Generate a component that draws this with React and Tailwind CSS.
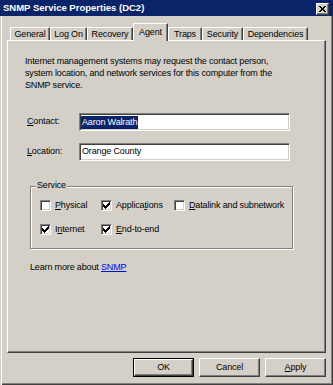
import React from "react";

const Check = () => (
  <svg width="7" height="7" viewBox="0 0 7 7" shapeRendering="crispEdges" fill="#000">
    <rect x="0" y="2" width="1" height="3" />
    <rect x="1" y="3" width="1" height="3" />
    <rect x="2" y="4" width="1" height="3" />
    <rect x="3" y="3" width="1" height="3" />
    <rect x="4" y="2" width="1" height="3" />
    <rect x="5" y="1" width="1" height="3" />
    <rect x="6" y="0" width="1" height="3" />
  </svg>
);

const Box = ({ checked }) => (
  <span className="w-[11px] h-[11px] bg-white border border-t-[#808080] border-l-[#808080] border-b-white border-r-white shadow-[inset_1px_1px_0_#404040,inset_-1px_-1px_0_#d4d0c8] flex items-center justify-center shrink-0">
    {checked && <Check />}
  </span>
);

const CheckItem = ({ checked, children }) => (
  <div className="flex items-center gap-[4px] h-[11px] whitespace-nowrap">
    <Box checked={checked} />
    <span className="leading-[11px]">{children}</span>
  </div>
);

const Tab = ({ w, children }) => (
  <div
    className={`${w} h-[13px] border-t border-l border-white border-r border-r-[#404040] shadow-[inset_-1px_0_0_#808080] flex items-center justify-center leading-[11px] whitespace-nowrap`}
  >
    {children}
  </div>
);

const Btn = ({ def, children }) =>
  def ? (
    <div className="w-[61px] h-[19px] border border-black flex">
      <div className="flex-1 border border-t-white border-l-white border-b-[#404040] border-r-[#404040] shadow-[inset_-1px_-1px_0_#808080] flex items-center justify-center leading-[11px]">
        {children}
      </div>
    </div>
  ) : (
    <div className="w-[61px] h-[19px] border border-t-white border-l-white border-b-[#404040] border-r-[#404040] shadow-[inset_-1px_-1px_0_#808080] flex items-center justify-center leading-[11px]">
      {children}
    </div>
  );

const Field = ({ children }) => (
  <div className="w-[211px] h-[18px] bg-white border border-t-[#808080] border-l-[#808080] border-b-white border-r-white shadow-[inset_1px_1px_0_#404040,inset_-1px_-1px_0_#d4d0c8] flex items-center pl-[1px]">
    {children}
  </div>
);

export default function App() {
  return (
    <div className="w-[333px] h-[385px] bg-[#d4d0c8] flex flex-col text-black text-[9px] tracking-[-0.15px] font-['Liberation_Sans',Arial,sans-serif] shadow-[inset_1px_0_0_#d4d0c8,inset_2px_0_0_#ffffff,inset_-1px_-1px_0_#404040,inset_-2px_-2px_0_#808080] overflow-hidden">
      {/* Title bar */}
      <div className="h-[16px] bg-[#0a246a] flex items-start justify-between pl-[3px] pr-[4px] shrink-0">
        <span className="text-white font-bold text-[9.5px] tracking-normal leading-[16px] whitespace-nowrap">
          SNMP Service Properties (DC2)
        </span>
        <div className="mt-[3px] w-[13px] h-[12px] bg-[#d4d0c8] border border-t-white border-l-white border-b-[#404040] border-r-[#404040] shadow-[inset_-1px_-1px_0_#808080] flex items-center justify-center">
          <svg width="7" height="6" viewBox="0 0 7 6" shapeRendering="crispEdges" fill="#000">
            <rect x="0" y="0" width="2" height="1" />
            <rect x="5" y="0" width="2" height="1" />
            <rect x="1" y="1" width="2" height="1" />
            <rect x="4" y="1" width="2" height="1" />
            <rect x="2" y="2" width="3" height="1" />
            <rect x="2" y="3" width="3" height="1" />
            <rect x="1" y="4" width="2" height="1" />
            <rect x="4" y="4" width="2" height="1" />
            <rect x="0" y="5" width="2" height="1" />
            <rect x="5" y="5" width="2" height="1" />
          </svg>
        </div>
      </div>

      {/* Tabs */}
      <div className="mt-[7px] h-[17px] flex items-end pl-[10px] shrink-0">
        <Tab w="w-[40px]">General</Tab>
        <Tab w="w-[37px]">Log On</Tab>
        <Tab w="w-[46px]">Recovery</Tab>
        <div className="relative z-10 w-[35px] h-[18px] -mb-[1px] bg-[#d4d0c8] border-t border-l border-white border-r border-r-[#404040] shadow-[inset_-1px_0_0_#808080] flex items-start justify-center pt-[3px] leading-[11px]">
          Agent
        </div>
        <Tab w="w-[34px]">Traps</Tab>
        <Tab w="w-[41px]">Security</Tab>
        <Tab w="w-[65px]">Dependencies</Tab>
      </div>

      {/* Panel */}
      <div className="mx-[7px] h-[313px] shrink-0 border-t border-l border-white border-r border-b border-r-[#404040] border-b-[#404040] shadow-[inset_-1px_-1px_0_#808080] flex flex-col">
        <p className="mt-[14px] pl-[17px] leading-[12px] whitespace-nowrap">
          Internet management systems may request the contact person,
          <br />
          system location, and network services for this computer from the
          <br />
          SNMP service.
        </p>

        <div className="mt-[22px] pl-[19px] flex items-center">
          <span className="w-[52px]">
            <u>C</u>ontact:
          </span>
          <Field>
            <span className="bg-[#0a246a] text-white h-[13px] leading-[13px] px-[1px] whitespace-nowrap">
              Aaron Walrath
            </span>
          </Field>
        </div>

        <div className="mt-[12px] pl-[19px] flex items-center">
          <span className="w-[52px]">
            <u>L</u>ocation:
          </span>
          <Field>
            <span className="pl-[1px] whitespace-nowrap">Orange County</span>
          </Field>
        </div>

        <div className="mt-[25px] ml-[22px] w-[263px] h-[63px] relative border border-[#808080] shadow-[1px_1px_0_#ffffff,inset_1px_1px_0_#ffffff]">
          <span className="absolute left-[5px] -top-[7px] px-[1px] bg-[#d4d0c8] leading-[11px]">
            Service
          </span>
          <div className="pt-[13px] pl-[9px] grid grid-cols-[61px_73px_auto] gap-y-[13px]">
            <CheckItem>
              <u>P</u>hysical
            </CheckItem>
            <CheckItem checked>
              Applica<u>t</u>ions
            </CheckItem>
            <CheckItem>
              <u>D</u>atalink and subnetwork
            </CheckItem>
            <CheckItem checked>
              I<u>n</u>ternet
            </CheckItem>
            <CheckItem checked>
              <u>E</u>nd-to-end
            </CheckItem>
          </div>
        </div>

        <p className="mt-[12px] pl-[22px] leading-[12px]">
          Learn more about <span className="text-[#0000ff] underline">SNMP</span>
        </p>
      </div>

      {/* Buttons */}
      <div className="mt-[5px] flex justify-end gap-[5px] pr-[7px] shrink-0">
        <Btn def>OK</Btn>
        <Btn>Cancel</Btn>
        <Btn>
          <span>
            <u>A</u>pply
          </span>
        </Btn>
      </div>
    </div>
  );
}
